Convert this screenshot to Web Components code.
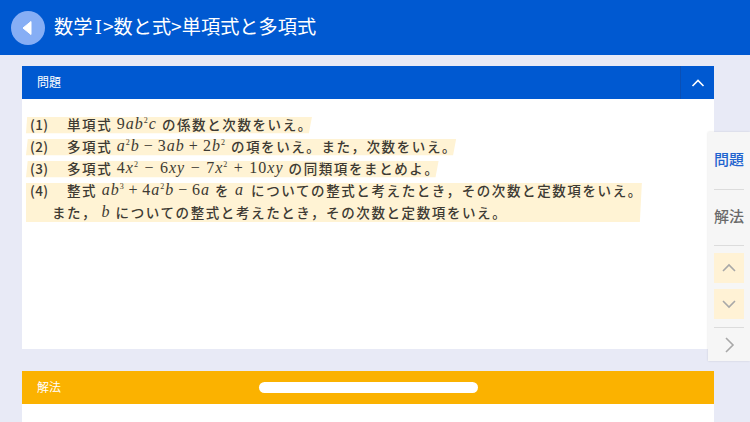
<!DOCTYPE html>
<html lang="ja">
<head>
<meta charset="utf-8">
<title>単項式と多項式</title>
<style>
html, body { margin: 0; height: 422px; overflow: hidden; }
body { background: #e8eaf6; font-family: "Noto Sans CJK JP", "Noto Sans", sans-serif; position: relative; }
</style>
</head>
<body>
<app-header>数学<span style="font-family:'DejaVu Serif',serif;font-size:19px;margin:0 1px 0 2px">Ⅰ</span>&gt;数と式&gt;単項式と多項式</app-header>
<main-area>
  <content-panel title-text="問題" open>
    <problem-list></problem-list>
  </content-panel>
  <content-panel title-text="解法" kind="answer"></content-panel>
</main-area>
<side-nav></side-nav>

<script>
class AppHeader extends HTMLElement {
    constructor() {
        super();
        this.attachShadow({ mode: "open" });
        this.shadowRoot.innerHTML = `
            <style>
                :host { display: flex; align-items: center; height: 55px; background: #0059d1; color: #fff; padding-left: 11px; box-sizing: border-box; }
                .back { width: 34px; height: 34px; border-radius: 50%; background: #86aef5; display: flex; align-items: center; justify-content: center; flex: none; }
                .title { margin: -1px 0 0 9px; font-size: 19.2px; font-weight: 400; line-height: 1; white-space: nowrap; }
            </style>
            <div class="back">
                <svg width="12" height="16" viewBox="0 0 12 16" style="margin-left:-3px"><path d="M10 1.5 L2 8 L10 14.5 Z" fill="#fff" stroke="#fff" stroke-linejoin="round"/></svg>
            </div>
            <div class="title"><slot></slot></div>
        `;
    }
}

class MainArea extends HTMLElement {
    constructor() {
        super();
        this.attachShadow({ mode: "open" });
        this.shadowRoot.innerHTML = `
            <style>
                :host { display: flex; flex-direction: column; gap: 22px; padding: 11px 36px 0 22px; }
            </style>
            <slot></slot>
        `;
    }
}

class ContentPanel extends HTMLElement {
    constructor() {
        super();
        this.attachShadow({ mode: "open" });
    }

    connectedCallback() {
        const answer = this.getAttribute("kind") === "answer";
        const open = this.hasAttribute("open");
        this.shadowRoot.innerHTML = `
            <style>
                :host { display: block; background: #fff; }
                .bar { height: 33px; display: flex; align-items: center; color: #fff; font-size: 12px; padding: 0 0 2px 15px; box-sizing: border-box; position: relative;
                       background: ${answer ? "#fbb200" : "#0059d1"}; }
                .toggle { position: absolute; right: 0; top: 0; width: 34px; height: 33px; border-left: 1px solid #0a4fb5; box-sizing: border-box; display: flex; align-items: center; justify-content: center; }
                .handle { position: absolute; left: 237px; top: 11px; width: 219px; height: 11px; border-radius: 6px; background: #fff; }
                .body { height: ${open ? "250px" : "18px"}; }
            </style>
            <div class="bar">
                ${this.getAttribute("title-text")}
                ${answer ? `<div class="handle"></div>` : `
                <div class="toggle">
                    <svg width="14" height="8" viewBox="0 0 14 8"><path d="M1.5 7 L7 1.5 L12.5 7" fill="none" stroke="#fff" stroke-width="1.6"/></svg>
                </div>`}
            </div>
            <div class="body"><slot></slot></div>
        `;
    }
}

class ProblemLine extends HTMLElement {
    constructor() {
        super();
        this.attachShadow({ mode: "open" });
        this.shadowRoot.innerHTML = `
            <style>
                :host { display: flex; align-items: center; width: fit-content; height: 22px; box-sizing: border-box; background: #fff3d4; padding: 0 4px 0 4px; white-space: nowrap;
                        font-size: 13.5px; font-weight: 500; color: #3d3a33; letter-spacing: 1.6px; clip-path: polygon(0.4% 18%, calc(100% - 5px) 18%, calc(100% - 8px) 92%, 0 92%); }
                :host([joined]) { clip-path: none; height: 22px; }
                .num { width: 37px; flex: none; letter-spacing: 0.4px; }
            </style>
            <span class="num"><slot name="num"></slot></span><slot></slot>
        `;
    }
}

class MathExpr extends HTMLElement {
    constructor() {
        super();
        this.attachShadow({ mode: "open" });
        this.shadowRoot.innerHTML = `
            <style>
                :host { display: inline-block; font-family: "Liberation Serif", serif; font-size: 16px; font-weight: 400; letter-spacing: 1px; font-style: italic; margin: 0 5px 0 4.5px; color: #3d3a33; }
            </style>
            <slot></slot>
        `;
    }
}

class ProblemList extends HTMLElement {
    constructor() {
        super();
        this.attachShadow({ mode: "open" });
        const sup = n => `<sup style="font-size:8px;line-height:0;font-style:normal">${n}</sup>`;
        const up = s => `<span style="font-style:normal">${s}</span>`;
        const op = (s, m) => `<span style="font-style:normal;margin:0 ${m}px">${s}</span>`;
        this.shadowRoot.innerHTML = `
            <style>
                :host { display: block; padding: 14px 0 0 4px; }
                .block { width: fit-content; background: #fff3d4; clip-path: polygon(0 9%, calc(100% - 5px) 9%, calc(100% - 7px) 98%, 0 98%); }
                .second { padding-left: 26px; height: 22px; display: flex; align-items: center; white-space: nowrap; font-size: 13.5px; font-weight: 500; color: #3d3a33; letter-spacing: 1.6px; }
            </style>
            <problem-line><span slot="num">(1)</span>単項式<math-expr>${up("9")}ab${sup(2)}c</math-expr>の係数と次数をいえ。</problem-line>
            <problem-line><span slot="num">(2)</span>多項式<math-expr>a${sup(2)}b${op("−", 4)}${up("3")}ab${op("+", 4)}${up("2")}b${sup(2)}</math-expr>の項をいえ。また，次数をいえ。</problem-line>
            <problem-line><span slot="num">(3)</span>多項式<math-expr>${up("4")}x${sup(2)}${op("−", 5.5)}${up("6")}xy${op("−", 5.5)}${up("7")}x${sup(2)}${op("+", 5.5)}${up("10")}xy</math-expr>の同類項をまとめよ。</problem-line>
            <div class="block">
                <problem-line joined style="background:none"><span slot="num">(4)</span>整式<math-expr>ab${sup(3)}${op("+", 3.8)}${up("4")}a${sup(2)}b${op("−", 3.8)}${up("6")}a</math-expr>を<math-expr style="margin:0 7px 0 5px">a</math-expr>についての整式と考えたとき，その次数と定数項をいえ。</problem-line>
                <div class="second">また，<math-expr>b</math-expr>についての整式と考えたとき，その次数と定数項をいえ。</div>
            </div>
        `;
    }
}

class SideNav extends HTMLElement {
    constructor() {
        super();
        this.attachShadow({ mode: "open" });
        const chev = (d, w, h) => `<svg width="${w}" height="${h}" viewBox="0 0 ${w} ${h}"><path d="${d}" fill="none" stroke="#a8a8a8" stroke-width="1.6"/></svg>`;
        this.shadowRoot.innerHTML = `
            <style>
                :host { position: absolute; left: 708px; top: 132px; width: 42px; height: 229px; background: #f6f6f6; box-sizing: border-box; padding: 0 0 0 6px; display: flex; flex-direction: column; font-size: 15px; font-weight: 500; box-shadow: 0 0 2px rgba(0,0,0,.12); }
                .tab { height: 58px; display: flex; align-items: center; color: #6a6a6a; width: 30px; justify-content: center; border-bottom: 1px solid #dcdcdc; flex: none; box-sizing: border-box; padding-bottom: 4px; white-space: nowrap; }
                .tab.on { color: #1f64cf; }
                .tab + .tab { height: 56px; }
                .arrows { display: flex; flex-direction: column; gap: 6px; padding: 7px 0 8px; border-bottom: 1px solid #dcdcdc; width: 30px; }
                .arrow { height: 30px; background: #fff2d5; display: flex; align-items: center; justify-content: center; }
                .next { flex: 1; display: flex; align-items: center; justify-content: center; width: 30px; }
            </style>
            <div class="tab on">問題</div>
            <div class="tab">解法</div>
            <div class="arrows">
                <div class="arrow">${chev("M1 8 L7 2 L13 8", 14, 10)}</div>
                <div class="arrow">${chev("M1 2 L7 8 L13 2", 14, 10)}</div>
            </div>
            <div class="next">${chev("M2 1 L9 8 L2 15", 11, 16)}</div>
        `;
    }
}

customElements.define("app-header", AppHeader);
customElements.define("main-area", MainArea);
customElements.define("content-panel", ContentPanel);
customElements.define("problem-line", ProblemLine);
customElements.define("math-expr", MathExpr);
customElements.define("problem-list", ProblemList);
customElements.define("side-nav", SideNav);
</script>
</body>
</html>
